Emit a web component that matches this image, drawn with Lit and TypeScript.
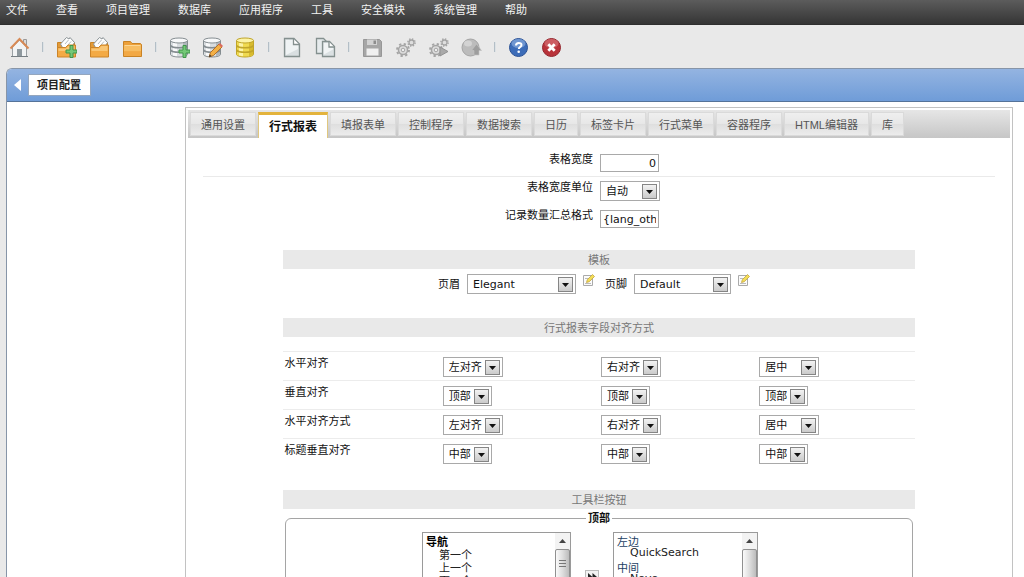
import { LitElement, html, css, svg, nothing } from "lit";
import { customElement, property, state } from "lit/decorators.js";
import { classMap } from "lit/directives/class-map.js";

const folder = svg`
  <path d="M1.5 4.500h7l1.500 2h8.500l1 1v12h-18z" fill="#eda039" stroke="#c98325"/>
  <path d="M2 8.500h17v6h-17z" fill="#f7bd62"/>
  <path d="M2 14.500h17v4.500h-17z" fill="#f2a844"/>
  <path d="M2.500 8.500h16" stroke="#fbd796"/>`;

const openFolder = svg`
  <path d="M1.500 5.500h17v13h-17z" fill="#e39a37" stroke="#c98325"/>
  <path d="M4.500 7l6-6.500 2.500 1.500 1-1.500 4.500 5-3 5h-9z" fill="#fdfdfd" stroke="#8b9396"/>
  <path d="M9 7l3.500-4M12 8l3-3.500" stroke="#b5bcc0" fill="none"/>
  <path d="M1.500 10.500h8l2.500-2.500h7.500v12h-18z" fill="#f3aa45" stroke="#cb8429"/>
  <path d="M2.500 11.500h7.500l2.500-2.500h6v5h-16z" fill="#f9c675"/>`;

const plus = svg`<path d="M14 8.500h3v4.500h4v3h-4v4.500h-3v-4.500h-4v-3h4z" fill="#74c877" stroke="#3f964b"/>`;

const database = (face: string, light: string, edge: string, shade: string) => svg`
  <path d="M1.500 3.500v14c0 1.200 3.500 2.500 8.500 2.500s8.500-1.300 8.500-2.500v-14" fill=${face} stroke=${edge}/>
  <path d="M4 5v13.500l4 .8v-14z" fill=${light}/>
  <path d="M14 5v14c2.500-.3 4-.9 4-1.500v-13z" fill=${shade}/>
  <ellipse cx="10" cy="3.500" rx="8.500" ry="2.500" fill=${light} stroke=${edge}/>
  <path d="M1.500 8.500c1 1.500 5 2.300 8.500 2.300s7.500-.8 8.500-2.300M1.500 13c1 1.500 5 2.300 8.500 2.300s7.500-.8 8.500-2.300" fill="none" stroke=${edge} stroke-width="1.500"/>`;

const greyDatabase = database("#d9dde0", "#f8f9fa", "#858d91", "#b0b7bb");

const sheet = svg`
  <path d="M2.500 1.500h9.500l5.500 5.500v12.500h-15z" fill="#d9dfe1" stroke="#84908f" stroke-width="1.300"/>
  <path d="M4 3h7v5h5v4l-12 6z" fill="#eff3f4"/>
  <path d="M11.500 2v5.500h5.500" fill="#fff" stroke="#84908f" stroke-width="1.300"/>`;

const gears = svg`
  <circle cx="8" cy="13" r="4.500" fill="#dedede" stroke="#a5a5a5" stroke-width="1.500"/>
  <circle cx="8" cy="13" r="6" fill="none" stroke="#a5a5a5" stroke-width="2" stroke-dasharray="2.300 2.412"/>
  <circle cx="8" cy="13" r="1.800" fill="#eee" stroke="#a5a5a5"/>
  <circle cx="16.500" cy="5.500" r="2.500" fill="#dedede" stroke="#a5a5a5" stroke-width="1.300"/>
  <circle cx="16.500" cy="5.500" r="3.600" fill="none" stroke="#a5a5a5" stroke-width="1.500" stroke-dasharray="1.400 1.427"/>`;

const icons: Record<string, unknown> = {
  home: svg`
    <path d="M3.500 10l7-7 7 7v9.500h-14z" fill="#f2f4f5" stroke="#9aa0a4"/>
    <path d="M14.500 2.500h3v6l-3-3z" fill="#d9dcde" stroke="#999"/>
    <path d="M1.500 11.500l9-9.500 9 9.500" fill="none" stroke="#d88a55" stroke-width="2"/>
    <path d="M8 12h5v7.500h-5z" fill="#8f999f"/>
    <path d="M2 19.500h17" stroke="#777f84"/>`,
  folderAdd: svg`${openFolder}${plus}`,
  folderOpen: openFolder,
  folder,
  dbAdd: svg`${greyDatabase}${plus}`,
  dbEdit: svg`${greyDatabase}
    <path d="M7 20l1.500-4.500 8.500-8.500 3 3-8.500 8.500z" fill="#f3b046" stroke="#b0702a"/>
    <path d="M16.500 7.500l1.500-1.500 3 3-1.500 1.500z" fill="#d9695c"/><path d="M7 20l.8-2.600 1.800 1.800z" fill="#333"/>`,
  db: database("#f0da50", "#fcf3a6", "#c0a52a", "#d8bb2e"),
  page: sheet,
  pages: svg`
    <path d="M1.500 1.500h7l3 3v12h-10z" fill="#e6ebed" stroke="#84908f" stroke-width="1.300"/>
    <path d="M7.500 4.500h7l5 5v10h-12z" fill="#dbe1e3" stroke="#84908f" stroke-width="1.300"/>
    <path d="M9 6h5v4.500h4v2l-9 5z" fill="#f1f4f5"/>
    <path d="M14 5v5h5" fill="#fff" stroke="#84908f" stroke-width="1.300"/>`,
  save: svg`
    <path d="M1.500 2.500h16l2 2v15h-18z" fill="#a6a6a6" stroke="#979797"/>
    <path d="M5 2.500h10v5.500h-10z" fill="#d2d2d2"/><path d="M11.500 3.500h2.500v3.500h-2.500z" fill="#8d8d8d"/>
    <path d="M4.500 11.500h12v7h-12z" fill="#f0f0f0"/>`,
  gears,
  gearsRun: svg`${gears}<path d="M12 10l8 4.500-8 4.500z" fill="#a9a9a9" stroke="#929292"/>`,
  deploy: svg`
    <circle cx="9.500" cy="10.500" r="8.500" fill="#bcbcbc" stroke="#a4a4a4"/>
    <ellipse cx="7" cy="6.500" rx="4" ry="3" fill="#d3d3d3"/>
    <path d="M15.500 7l5 6.500h-2.500v4.500h-5v-4.500h-2.500z" fill="#9e9e9e" stroke="#c4c4c4" stroke-width=".6"/>`,
  help: svg`
    <circle cx="10.500" cy="10.500" r="9" fill="#3c6cb8" stroke="#2b5296"/>
    <ellipse cx="10.500" cy="6.500" rx="7" ry="4.500" fill="#85a8dc" fill-opacity=".7"/>
    <path d="M8 8.500c0-3.500 5.500-3.300 5.500-.5 0 2-2.700 2-2.700 4" fill="none" stroke="#fff" stroke-width="2"/>
    <circle cx="10.700" cy="14.800" r="1.300" fill="#fff"/>`,
  close: svg`
    <circle cx="10.500" cy="10.500" r="9" fill="#b8333a" stroke="#93252d"/>
    <ellipse cx="10.500" cy="6.500" rx="7" ry="4.500" fill="#d97a7d" fill-opacity=".6"/>
    <path d="M7.300 7.300l6.400 6.400M13.700 7.300l-6.400 6.400" stroke="#fff" stroke-width="2.800"/>`,
};

const toolbar: [string, string][][] = [
  [["home", "首页"]],
  [["folderAdd", "新建项目"], ["folderOpen", "打开项目"], ["folder", "关闭项目"]],
  [["dbAdd", "新建连接"], ["dbEdit", "编辑连接"], ["db", "数据库"]],
  [["page", "新建程序"], ["pages", "复制程序"]],
  [["save", "保存"], ["gears", "生成"], ["gearsRun", "运行"], ["deploy", "发布"]],
  [["help", "帮助"], ["close", "退出"]],
];

const menu = ["文件", "查看", "项目管理", "数据库", "应用程序", "工具", "安全模块", "系统管理", "帮助"];
const tabs = ["通用设置", "行式报表", "填报表单", "控制程序", "数据搜索", "日历", "标签卡片", "行式菜单", "容器程序", "HTML编辑器", "库"];

const horizontal = ["左对齐", "居中", "右对齐"];
const vertical = ["顶部", "中部", "底部"];
const alignment = [
  { label: "水平对齐", options: horizontal, values: ["左对齐", "右对齐", "居中"] },
  { label: "垂直对齐", options: vertical, values: ["顶部", "顶部", "顶部"] },
  { label: "水平对齐方式", options: horizontal, values: ["左对齐", "右对齐", "居中"] },
  { label: "标题垂直对齐", options: vertical, values: ["中部", "中部", "中部"] },
];
const columns = ["文字", "数字", "日期"];

const base = css`
  * { box-sizing: border-box; }
  button, input, select { font: inherit; color: inherit; margin: 0; border-radius: 0; }
`;

const control = css`
  .select {
    appearance: none;
    height: 20px;
    padding: 1px 20px 0 5px;
    border: 1px solid #a9a9a9;
    color: #111;
    line-height: 17px;
    background: #fff url("data:image/svg+xml,%3Csvg xmlns='http://www.w3.org/2000/svg' width='15' height='15'%3E%3ClinearGradient id='g' x2='0' y2='1'%3E%3Cstop stop-color='%23f4f4f4'/%3E%3Cstop offset='1' stop-color='%23c9c9c9'/%3E%3C/linearGradient%3E%3Crect x='.5' y='.5' width='14' height='14' fill='url(%23g)' stroke='%23858585'/%3E%3Cpath d='M4 6h7l-3.500 4z' fill='%23111'/%3E%3C/svg%3E") no-repeat right 2px center;
  }
`;

@customElement("tool-icon")
class ToolIcon extends LitElement {
  @property() name = "";
  static styles = css`
    :host { display: block; width: 21px; height: 21px; }
    svg { display: block; width: 100%; height: 100%; }
  `;
  render() {
    return html`<svg viewBox="0 0 21 21" aria-hidden="true">${icons[this.name] ?? nothing}</svg>`;
  }
}

@customElement("list-box")
class ListBox extends LitElement {
  @property() label = "";
  @property({ attribute: false }) groups: { name: string; items: string[] }[] = [];
  @property({ type: Boolean }) strong = false;
  @property({ type: Boolean }) long = false;
  static styles = [base, css`
    :host { display: flex; height: 160px; border: 1px solid #9a9a9a; background: #fff; }
    .list {
      flex: 1; min-width: 0; height: 100%; border: 0; padding: 0 1px; background: #fff;
      overflow-y: auto; scrollbar-width: none; outline: 0;
    }
    .group, .item { height: 13px; min-height: 0; line-height: 13px; padding: 0 2px; color: #1d3f63; }
    .item { padding-left: 15px; color: #222; }
    .bold { font-weight: bold; color: #000; }
    .track { width: 15px; background: #ececec; display: flex; flex-direction: column; align-items: stretch; }
    .up { height: 16px; display: grid; place-items: center; background: #f3f3f3; }
    .up svg { width: 7px; height: 4px; }
    .thumb {
      height: 30px; border: 1px solid #909090; border-radius: 2px;
      display: grid; place-items: center;
      background: linear-gradient(90deg, #fafafa, #dedede 50%, #bcbcbc);
    }
    .thumb.tall { height: 90px; }
    .thumb svg { width: 7px; height: 8px; }
  `];
  render() {
    return html`
      <select class="list" multiple aria-label=${this.label}>
        ${this.groups.map((g) => html`
          <option class=${classMap({ group: true, bold: this.strong })}>${g.name}</option>
          ${g.items.map((i) => html`<option class="item">${i}</option>`)}`)}
      </select>
      <div class="track" aria-hidden="true">
        <div class="up"><svg viewBox="0 0 7 4"><path d="M0 4l3.500-4 3.500 4z" fill="#444"/></svg></div>
        <div class=${classMap({ thumb: true, tall: this.long })}>
          <svg viewBox="0 0 7 8"><path d="M0 .5h7M0 3.500h7M0 6.500h7" stroke="#777"/></svg>
        </div>
      </div>`;
  }
}

@customElement("app-root")
class AppRoot extends LitElement {
  @state() private active = "行式报表";

  static styles = [base, control, css`
    :host {
      display: flex; flex-direction: column; height: 100vh; overflow: hidden;
      background: #e9e9e9; color: #111;
      font: 11px/14px "DejaVu Sans", "Noto Sans CJK SC", sans-serif;
    }
    .menu {
      display: flex; gap: 28px; height: 25px; flex: none; padding: 4px 6px 0;
      background: linear-gradient(#5c5c5c, #353535); border-bottom: 1px solid #2f2f2f;
    }
    .menu a { color: #f2f2f2; text-decoration: none; white-space: nowrap; }
    .tools { display: flex; align-items: center; gap: 12px; height: 43px; flex: none; padding: 1px 9px 0; }
    .tool { border: 0; padding: 0; background: none; }
    .sep { width: 2px; height: 10px; background: #b3bec6; border-right: 1px solid #dde2e5; }
    .frame {
      flex: 1; min-height: 0; margin-left: 6px; overflow: hidden;
      border: 1px solid #8795a8; border-width: 1px 0 0 1px; border-radius: 6px 0 0 0; background: #fff;
    }
    .title {
      display: flex; align-items: center; gap: 7px; height: 33px; padding-left: 7px;
      background: linear-gradient(#94b4e1, #6f9cd8); border-bottom: 1px solid #557399;
    }
    .back { border: 0; padding: 0; background: none; width: 7px; height: 14px; }
    .back svg { display: block; width: 7px; height: 14px; }
    .heading {
      margin: 0; font-size: 11px; line-height: 19px; padding: 1px 9px 0 8px; background: #fff;
      border: 1px solid #94a6be; color: #222;
    }
    .panel { margin: 5px 11px 0 178px; border: 1px solid #c2c2c2; padding: 2px 2px 0; min-height: 600px; }
    .tabs {
      display: flex; gap: 2px; height: 28px; padding: 2px 2px 0;
      background: linear-gradient(#e6e6e6, #c6c6c6);
    }
    .tab {
      height: 24px; padding: 1px 10px 0; border: 1px solid #dadada; white-space: nowrap;
      color: #555; background: linear-gradient(#efefef, #e7e7e7 50%, #dedede 50%, #ececec);
      font-family: "Liberation Sans", "Noto Sans CJK SC", sans-serif;
    }
    .tab.on {
      height: 26px; font-size: 12px; font-weight: bold; color: #111; background: #fff;
      border: 1px solid #e0c77e; border-top: 3px solid #e3b33c; border-bottom: 0;
    }
    .form { margin: 11px 15px 17px; }
    .row {
      display: grid; grid-template-columns: 1fr 1fr; height: 28px; padding-top: 4px;
      border-bottom: 1px solid transparent;
    }
    .row.line { border-color: #eaeaea; }
    .row label { text-align: right; padding-right: 6px; }
    .cell { display: flex; align-items: center; height: 20px; padding-left: 1px; }
    .input { width: 59px; height: 18px; border: 1px solid #a9a9a9; padding: 0 2px; background: #fff; }
    .number { text-align: right; }
    .unit { width: 60px; }
    .sections { width: 77%; margin: 0 auto; }
    .bar {
      margin: 0; height: 19px; background: #e9e9e9; color: #777;
      font-size: 11px; font-weight: normal; line-height: 22px; text-align: center;
    }
    .templates {
      display: flex; justify-content: center; align-items: center; gap: 7px;
      height: 20px; margin: 5px 0 24px; padding-right: 10px;
    }
    .templates label { padding-top: 1px; }
    .header-select { width: 109px; }
    .footer-select { width: 97px; }
    .edit { border: 0; padding: 0; background: none; width: 12px; height: 20px; }
    .edit svg { display: block; width: 12px; height: 12px; margin-bottom: 8px; }
    .edit + label { margin-left: 3px; }
    .grid { width: 100%; table-layout: fixed; border-collapse: collapse; margin: 14px 0 22px; }
    .grid tr { height: 29px; }
    .grid th, .grid td {
      padding: 5px 2px 0; border-top: 1px solid #ececec; vertical-align: top;
      text-align: left; font-weight: normal;
    }
    .grid select { display: block; }
    .buttons { margin: 2px 2px 0; padding: 6px 0 8px; border: 1px solid #a5a5a5; border-radius: 6px; min-width: 0; }
    .buttons legend { margin: 0 auto; padding: 1px 2px 0; font-weight: bold; line-height: 14px; }
    .picker { display: flex; justify-content: center; align-items: flex-start; gap: 14px; padding-right: 18px; }
    .from { width: 149px; }
    .to { width: 145px; }
    .move {
      width: 14px; height: 14px; margin-top: 38px; padding: 0; border: 1px solid #bcbcbc; background: #f2f2f2;
      display: grid; place-items: center;
    }
    .move svg { width: 9px; height: 8px; }
  `];

  private choice(options: string[], value: string, label: string) {
    return html`<select class="select" aria-label=${label}>
      ${options.map((o) => html`<option ?selected=${o === value}>${o}</option>`)}
    </select>`;
  }

  private editButton(label: string) {
    return html`<button class="edit" aria-label=${label}>
      <svg viewBox="0 0 12 12"><path d="M.5 1.500h9v10h-9z" fill="#fbfbfb" stroke="#aaa"/>
      <path d="M2 4.500h4M2 9.500h6" stroke="#bbb"/>
      <path d="M3.500 8.500l.8-2.800 5.200-5.200 2 2-5.200 5.200z" fill="#f3de57" stroke="#c3a342" stroke-width=".8"/></svg>
    </button>`;
  }

  render() {
    return html`
      <nav class="menu">${menu.map((m) => html`<a href="#">${m}</a>`)}</nav>
      <div class="tools" role="toolbar">
        ${toolbar.map((group, i) => html`
          ${i ? html`<span class="sep"></span>` : nothing}
          ${group.map(([name, label]) => html`
            <button class="tool" aria-label=${label}><tool-icon name=${name}></tool-icon></button>`)}`)}
      </div>
      <main class="frame">
        <header class="title">
          <button class="back" aria-label="返回">
            <svg viewBox="0 0 7 14"><path d="M7 1v12l-7-6z" fill="#fff"/></svg>
          </button>
          <h1 class="heading">项目配置</h1>
        </header>
        <div class="panel">
          <div class="tabs" role="tablist">
            ${tabs.map((t) => html`
              <button role="tab" aria-selected=${t === this.active}
                class=${classMap({ tab: true, on: t === this.active })}
                @click=${() => (this.active = t)}>${t}</button>`)}
          </div>
          <div class="form">
            <div class="row line">
              <label for="width">表格宽度</label>
              <div class="cell"><input id="width" class="input number" value="0"></div>
            </div>
            <div class="row">
              <label for="unit">表格宽度单位</label>
              <div class="cell"><select id="unit" class="select unit"><option>自动</option><option>像素</option></select></div>
            </div>
            <div class="row">
              <label for="summary">记录数量汇总格式</label>
              <div class="cell"><input id="summary" class="input" value="{lang_othr_smry_info}"></div>
            </div>
          </div>
          <div class="sections">
            <h2 class="bar">模板</h2>
            <div class="templates">
              <label for="head">页眉</label>
              <select id="head" class="select header-select"><option>Elegant</option></select>
              ${this.editButton("编辑页眉")}
              <label for="foot">页脚</label>
              <select id="foot" class="select footer-select"><option>Default</option></select>
              ${this.editButton("编辑页脚")}
            </div>
            <h2 class="bar">行式报表字段对齐方式</h2>
            <table class="grid">
              <tbody>
                ${alignment.map((r) => html`<tr>
                  <th scope="row">${r.label}</th>
                  ${r.values.map((v, i) => html`<td>${this.choice(r.options, v, r.label + " " + columns[i])}</td>`)}
                </tr>`)}
              </tbody>
            </table>
            <h2 class="bar">工具栏按钮</h2>
            <fieldset class="buttons">
              <legend>顶部</legend>
              <div class="picker">
                <list-box class="from" label="可用按钮" strong
                  .groups=${[{ name: "导航", items: ["第一个", "上一个", "下一个", "最后一个"] }]}></list-box>
                <button class="move" aria-label="添加">
                  <svg viewBox="0 0 9 8"><path d="M0 0l4.500 4-4.500 4zM4.500 0l4.500 4-4.500 4z" fill="#222"/></svg>
                </button>
                <list-box class="to" label="已选按钮" long
                  .groups=${[{ name: "左边", items: ["QuickSearch"] }, { name: "中间", items: ["Novo"] }]}></list-box>
              </div>
            </fieldset>
          </div>
        </div>
      </main>`;
  }
}
